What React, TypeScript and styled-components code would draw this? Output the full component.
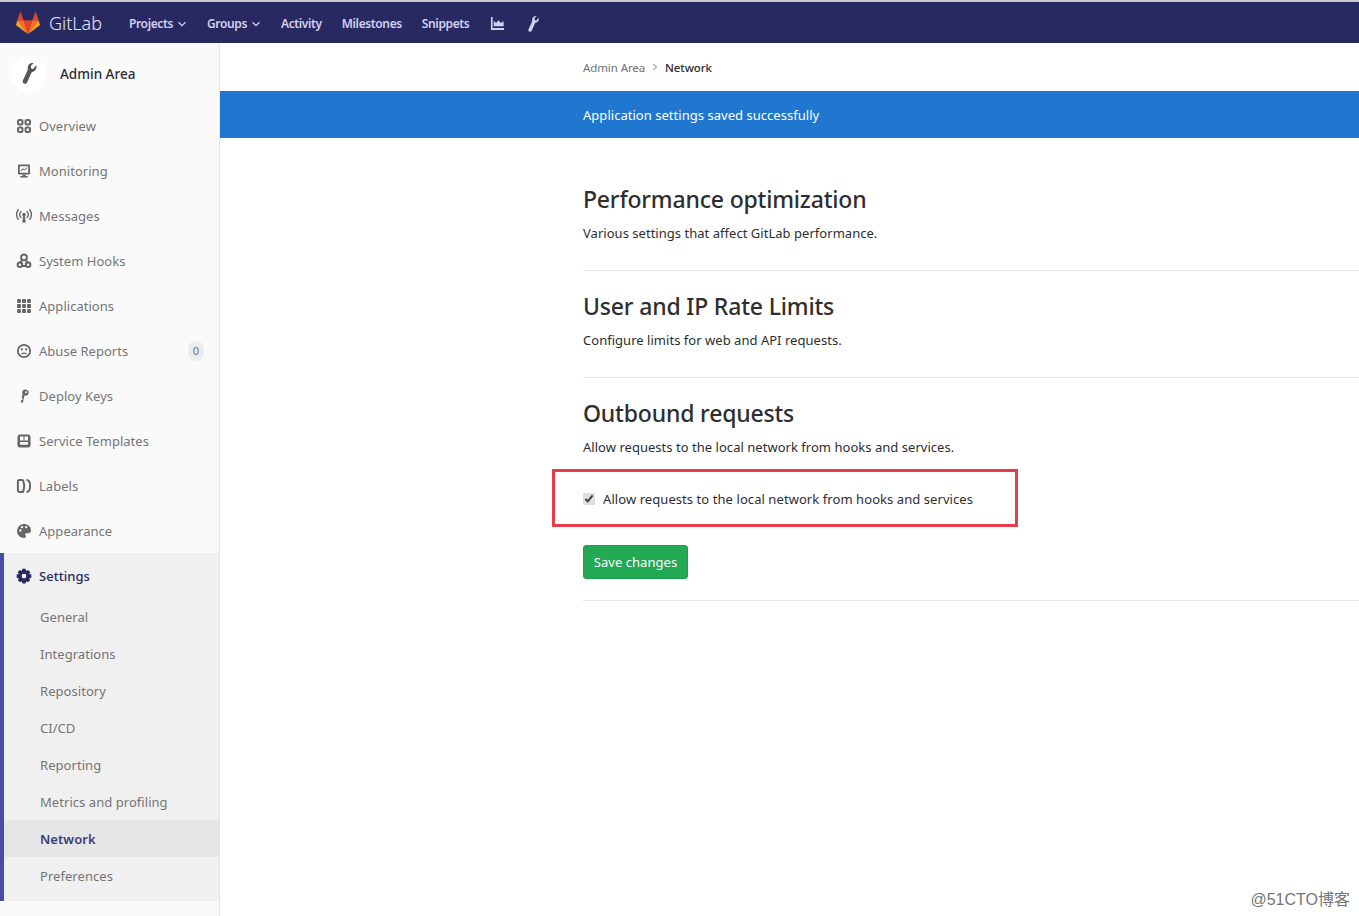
import styled, { createGlobalStyle } from "styled-components";
import type { ReactNode } from "react";

const GlobalStyle = createGlobalStyle`
    html, body {
        margin: 0;
        padding: 0;
        height: 100%;
        overflow: hidden;
        background: #fff;
        font-family: "Noto Sans", "Open Sans", sans-serif;
    }
    * { box-sizing: border-box; }
`

const Page = styled.div`
    position: relative;
    width: 1359px;
    height: 916px;
    display: flex;
    flex-direction: column;
    overflow: hidden;
`

const TopBar = styled.header`
    height: 43px;
    flex: none;
    display: flex;
    align-items: center;
    padding-left: 16px;
    background: #292961;
    border-top: 2px solid #c9c9d2;
`

const Brand = styled.div`
    display: flex;
    align-items: center;
    gap: 9px;
    width: 113px;
    color: #e4e4f4;
    font-size: 18px;
    font-weight: 300;
`

const TopNav = styled.nav`
    display: flex;
    align-items: center;
    gap: 20px;
    padding-top: 2px;
`

const TopLink = styled.a`
    display: flex;
    align-items: center;
    gap: 4px;
    color: #d1d1f0;
    font-size: 12px;
    font-weight: 600;
    letter-spacing: -0.37px;
`

const TopIcon = styled.span<{ $gap?: number }>`
    display: flex;
    margin-left: ${p => p.$gap ?? 0}px;
    color: #d1d1f0;
`

const Body = styled.div`
    flex: 1;
    display: flex;
    min-height: 0;
`

const Sidebar = styled.aside`
    width: 220px;
    flex: none;
    background: #fafafa;
    border-right: 1px solid #e5e5e5;
`

const SidebarHead = styled.div`
    height: 60px;
    display: flex;
    align-items: center;
    gap: 13px;
    padding: 1px 0 0 11px;
    color: #2e2e2e;
    font-size: 13.5px;
    font-weight: 500;
`

const Avatar = styled.div`
    width: 36px;
    height: 36px;
    border-radius: 50%;
    background: #fff;
    color: #555;
    display: flex;
    align-items: center;
    justify-content: center;
`

const Item = styled.div<{ $open?: boolean }>`
    height: 45px;
    display: flex;
    align-items: center;
    gap: 7px;
    padding: 0 15px 0 16px;
    color: ${p => p.$open ? "#292961" : "#757575"};
    font-size: 13px;
    letter-spacing: 0.03px;
    font-weight: ${p => p.$open ? 500 : 400};
`

const ItemIcon = styled.span`
    width: 16px;
    height: 16px;
    flex: none;
    display: flex;
    align-items: center;
    justify-content: center;
    color: #666;
`

const SettingsIcon = styled(ItemIcon)`
    color: #292961;
`

const Badge = styled.span`
    margin-left: auto;
    width: 16px;
    height: 20px;
    border-radius: 8px;
    background: #ececec;
    color: #707070;
    font-size: 11px;
    display: flex;
    align-items: center;
    justify-content: center;
`

const Group = styled.div`
    background: #f0f0f0;
    border-left: 4px solid #4b4ba3;
    padding-bottom: 7px;
`

const GroupItem = styled(Item)`
    margin-left: -4px;
`

const SubItem = styled.div<{ $active?: boolean }>`
    height: 37px;
    display: flex;
    align-items: center;
    padding-left: 36px;
    font-size: 13px;
    letter-spacing: 0.05px;
    color: ${p => p.$active ? "#3d3d7a" : "#757575"};
    font-weight: ${p => p.$active ? 600 : 400};
    background: ${p => p.$active ? "#e6e6e6" : "transparent"};
`

const Main = styled.main`
    flex: 1;
    min-width: 0;
`

const Crumbs = styled.div`
    height: 48px;
    display: flex;
    align-items: center;
    gap: 7px;
    padding-left: 363px;
    font-size: 11.5px;
    letter-spacing: -0.1px;
    color: #707070;
`

const CrumbCurrent = styled.span`
    color: #2e2e2e;
    font-weight: 500;
`

const Flash = styled.div`
    height: 47px;
    display: flex;
    align-items: center;
    padding-left: 363px;
    background: #2077cf;
    color: #fff;
    font-size: 13px;
    letter-spacing: 0.03px;
`

const Content = styled.div`
    padding: 43px 0 0 363px;
`

const Section = styled.section`
    height: 90px;
    margin-bottom: 17px;
    border-bottom: 1px solid #e5e5e5;
`

const LastSection = styled.section`
    height: 206px;
    border-bottom: 1px solid #e5e5e5;
`

const Title = styled.h4`
    margin: 0;
    height: 36px;
    line-height: 36px;
    color: #2e2e2e;
    font-size: 23px;
    font-weight: 500;
    letter-spacing: -0.18px;
`

const Desc = styled.p`
    margin: 6px 0 0;
    line-height: 20px;
    color: #2e2e2e;
    font-size: 13px;
    letter-spacing: 0.03px;
`

const CheckRow = styled.label`
    display: flex;
    align-items: center;
    gap: 8px;
    margin-top: 32px;
    height: 20px;
    color: #2e2e2e;
    font-size: 13px;
    letter-spacing: 0.07px;
`

const Check = styled.input`
    width: 12px;
    height: 12px;
    margin: 0;
    accent-color: #dedede;
`

const SaveButton = styled.button`
    display: block;
    margin-top: 36px;
    width: 105px;
    height: 34px;
    padding: 0;
    border: 1px solid #1e9e4c;
    border-radius: 3px;
    background: #23a854;
    color: #fff;
    font-family: inherit;
    font-size: 13px;
    letter-spacing: 0.05px;
`

const Highlight = styled.div`
    position: absolute;
    left: 552px;
    top: 469px;
    width: 466px;
    height: 58px;
    border: 3px solid #e53e4a;
    pointer-events: none;
`

const Watermark = styled.div`
    position: absolute;
    right: 9px;
    bottom: 6px;
    color: #757575;
    font-family: "Liberation Sans", "Noto Sans CJK SC", sans-serif;
    font-size: 16px;
    text-shadow: 0 0 3px #fff;
`

function Svg({ size = 16, children }: { size?: number; children: ReactNode }) {
    return (
        <svg width={size} height={size} viewBox="0 0 16 16" fill="currentColor">
            {children}
        </svg>
    )
}

const Wrench = ({ width, height }: { width: number; height: number }) => (
    <svg width={width} height={height} viewBox="0 0 11 16" fill="currentColor">
        <path d="M10.600 1.800 8.300 4.600 6.600 4l.1-2.100L8.600.1C6-.2 3.900 1.600 4.200 4.200c0 .7-.1 1.100-.3 1.700L.5 13.200c-.4 1 -.1 2 .9 2.500.9.4 1.900 0 2.300-.9l3.200-7.200c.3-.6.7-.8 1.300-1C10 6 11.400 4 10.600 1.800z" />
    </svg>
)

const Chevron = () => (
    <svg width="10" height="10" viewBox="0 0 10 10" fill="none" stroke="currentColor" strokeWidth="1.300">
        <path d="M1.500 3.200 5 6.700l3.500-3.500" />
    </svg>
)

const Logo = () => (
    <svg width="24" height="22" viewBox="0 0 24 22">
        <path fill="#e24329" d="M12 22 16.400 8.300H7.600z" />
        <path fill="#fc6d26" d="M12 22 7.600 8.300H1.400z" />
        <path fill="#fca326" d="M1.400 8.300.1 12.500c-.1.4 0 .8.3 1L12 22z" />
        <path fill="#e24329" d="M1.400 8.300h6.200L4.900.5c-.1-.4-.7-.4-.9 0z" />
        <path fill="#fc6d26" d="M12 22l4.400-13.700h6.200z" />
        <path fill="#fca326" d="M22.600 8.300l1.300 4.200c.1.4 0 .8-.3 1L12 22z" />
        <path fill="#e24329" d="M22.600 8.300h-6.200L19.100.5c.1-.4.7-.4.9 0z" />
    </svg>
)

const icons: Record<string, ReactNode> = {
    overview: (
        <g fill="none" stroke="currentColor" strokeWidth="2">
            <rect x="2" y="2" width="4.500" height="4.500" rx="1.500" />
            <rect x="9.500" y="2" width="4.500" height="4.500" rx="1.500" />
            <rect x="2" y="9.500" width="4.500" height="4.500" rx="1.500" />
            <rect x="9.500" y="9.500" width="4.500" height="4.500" rx="1.500" />
        </g>
    ),
    monitoring: (
        <>
            <path fillRule="evenodd" d="M3 1.500h10a1 1 0 0 1 1 1v8a1 1 0 0 1-1 1H3a1 1 0 0 1-1-1v-8a1 1 0 0 1 1-1zm.8 1.700v6.600h8.400V3.200z" />
            <path d="M4.500 7.600 7 5.200l1.400 1.200L11 4.300l.4.6-3 2.600L7 6.400 5 8.200zM6.500 11.500h3v1.500h2.200v1.500H4.300V13h2.200z" />
        </>
    ),
    messages: (
        <>
            <circle cx="8" cy="6.500" r="1.800" />
            <path d="M7.200 8h1.600l1 6.500H6.200z" />
            <g fill="none" stroke="currentColor" strokeWidth="1.400" strokeLinecap="round">
                <path d="M4.900 3.600a4.400 4.400 0 0 0 0 5.800M11.100 3.600a4.400 4.400 0 0 1 0 5.800" />
                <path d="M2.300 1.800a7.200 7.200 0 0 0 0 9.400M13.700 1.800a7.200 7.200 0 0 1 0 9.400" />
            </g>
        </>
    ),
    hooks: (
        <g fill="none" stroke="currentColor" strokeWidth="2">
            <circle cx="8" cy="4.300" r="2.900" />
            <path d="M6.400 6.800 3.800 10.200M9.600 6.800l2.600 3.400" />
            <circle cx="3.900" cy="11.700" r="2.300" />
            <circle cx="12.100" cy="11.700" r="2.300" />
            <path d="M5.500 13h5" />
        </g>
    ),
    applications: (
        <>
            {[1, 6, 11].flatMap(y => [1, 6, 11].map(x => (
                <rect key={`${x}-${y}`} x={x} y={y} width="4" height="4" rx={(x + y) % 2 ? 0.4 : 1.200} />
            )))}
        </>
    ),
    abuse: (
        <>
            <path fillRule="evenodd" d="M8 1a7 7 0 1 1 0 14A7 7 0 0 1 8 1zm0 1.800a5.200 5.200 0 1 0 0 10.400A5.200 5.200 0 0 0 8 2.800z" />
            <circle cx="5.900" cy="6.400" r="1.100" />
            <circle cx="10.100" cy="6.400" r="1.100" />
            <path d="M5 10.800c1.600-1.700 4.400-1.700 6 0l-.8.700c-1.300-1.100-3.100-1.100-4.400 0z" />
        </>
    ),
    keys: (
        <path fillRule="evenodd" d="M9.800 1.500a3 3 0 0 1 1.200 5.700 3 3 0 0 1-2.600.3L6.900 14.500H4.700l.6-2.600H6.400l.3-1.300H5.600l1-4.600A3 3 0 0 1 9.800 1.500zm.3 1.700a1 1 0 1 0 0 2 1 1 0 0 0 0-2z" />
    ),
    templates: (
        <path fillRule="evenodd" d="M4 1.500h8A2.500 2.500 0 0 1 14.500 4v8a2.500 2.500 0 0 1-2.500 2.500H4A2.500 2.500 0 0 1 1.500 12V4A2.500 2.500 0 0 1 4 1.500zM4 3.500v4h3.500v-4zm4.500 0v4H12v-4zM4 9v2.800h8V9z" />
    ),
    labels: (
        <g fill="none" stroke="currentColor" strokeWidth="2">
            <path d="M3.500 2h2.300c.9 0 1.600.7 1.600 1.600 0 1.200.8 1.800.8 4.400s-.8 3.300-.8 4.400c0 .9-.7 1.600-1.600 1.600H3.500c-1 0-1.600-.7-1.600-1.600V3.600C1.900 2.700 2.500 2 3.500 2z" />
            <path d="M10.500 2c2.500 0 3.600 2.500 3.600 6 0 3.600-1.200 6-3.600 6" />
        </g>
    ),
    appearance: (
        <path fillRule="evenodd" d="M8 1a7 7 0 0 0 0 14c1.300 0 1.900-.8 1.900-1.700 0-1-.7-1.300-.7-2 0-.6.5-1 1.200-1h1.800c1.800 0 2.800-1.300 2.800-3C15 3.700 11.800 1 8 1zM4.400 8.600a1.200 1.200 0 1 1 0-2.400 1.200 1.200 0 0 1 0 2.400zM6 5.300a1.200 1.200 0 1 1 0-2.400 1.200 1.200 0 0 1 0 2.400zm4.200 0a1.200 1.200 0 1 1 0-2.400 1.200 1.200 0 0 1 0 2.400z" />
    ),
    settings: (
        <path fillRule="evenodd" d="M6.400.8h3.200l.5 2.100 1.900-1 2.200 2.200-1 1.900 2.100.5v3.200l-2.100.5 1 1.900-2.200 2.200-1.900-1-.5 2.100H6.400l-.5-2.100-1.900 1-2.200-2.200 1-1.900-2.100-.5V6.500l2.100-.5-1-1.900L3.900 1.900l1.900 1zM8 5.700a2.400 2.400 0 1 0 0 4.800 2.400 2.400 0 0 0 0-4.800z" />
    ),
}

const mainItems = [
    { label: "Overview", icon: "overview" },
    { label: "Monitoring", icon: "monitoring" },
    { label: "Messages", icon: "messages" },
    { label: "System Hooks", icon: "hooks" },
    { label: "Applications", icon: "applications" },
    { label: "Abuse Reports", icon: "abuse", badge: "0" },
    { label: "Deploy Keys", icon: "keys" },
    { label: "Service Templates", icon: "templates" },
    { label: "Labels", icon: "labels" },
    { label: "Appearance", icon: "appearance" },
]

const subItems = ["General", "Integrations", "Repository", "CI/CD", "Reporting", "Metrics and profiling", "Network", "Preferences"]

export default function App() {
    return (
        <Page>
            <GlobalStyle />
            <TopBar>
                <Brand><Logo />GitLab</Brand>
                <TopNav>
                    <TopLink>Projects <Chevron /></TopLink>
                    <TopLink>Groups <Chevron /></TopLink>
                    <TopLink>Activity</TopLink>
                    <TopLink>Milestones</TopLink>
                    <TopLink>Snippets</TopLink>
                    <TopIcon $gap={1}>
                        <Svg size={15}>
                            <path d="M1 1h1.800v11.800H15V15H1z" />
                            <path d="M4 11V5l2.500 2.500L9 4.500l2.500 3 3-2V11z" />
                        </Svg>
                    </TopIcon>
                    <TopIcon $gap={3}><Wrench width={11} height={16} /></TopIcon>
                </TopNav>
            </TopBar>
            <Body>
                <Sidebar>
                    <SidebarHead>
                        <Avatar><Wrench width={15} height={21} /></Avatar>
                        Admin Area
                    </SidebarHead>
                    {mainItems.map(item => (
                        <Item key={item.label}>
                            <ItemIcon><Svg>{icons[item.icon]}</Svg></ItemIcon>
                            {item.label}
                            {item.badge && <Badge>{item.badge}</Badge>}
                        </Item>
                    ))}
                    <Group>
                        <GroupItem $open>
                            <SettingsIcon><Svg>{icons.settings}</Svg></SettingsIcon>
                            Settings
                        </GroupItem>
                        {subItems.map(label => (
                            <SubItem key={label} $active={label === "Network"}>{label}</SubItem>
                        ))}
                    </Group>
                </Sidebar>
                <Main>
                    <Crumbs>
                        Admin Area
                        <svg width="6" height="8" viewBox="0 0 6 8" fill="none" stroke="#707070">
                            <path d="M1.500 1 4.500 4l-3 3" />
                        </svg>
                        <CrumbCurrent>Network</CrumbCurrent>
                    </Crumbs>
                    <Flash>Application settings saved successfully</Flash>
                    <Content>
                        <Section>
                            <Title>Performance optimization</Title>
                            <Desc>Various settings that affect GitLab performance.</Desc>
                        </Section>
                        <Section>
                            <Title>User and IP Rate Limits</Title>
                            <Desc>Configure limits for web and API requests.</Desc>
                        </Section>
                        <LastSection>
                            <Title>Outbound requests</Title>
                            <Desc>Allow requests to the local network from hooks and services.</Desc>
                            <CheckRow>
                                <Check type="checkbox" defaultChecked />
                                Allow requests to the local network from hooks and services
                            </CheckRow>
                            <SaveButton>Save changes</SaveButton>
                        </LastSection>
                    </Content>
                </Main>
            </Body>
            <Highlight />
            <Watermark>@51CTO博客</Watermark>
        </Page>
    )
}
